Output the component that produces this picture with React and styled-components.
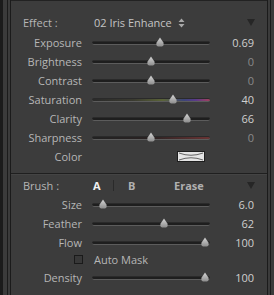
import React from "react";
import styled, { createGlobalStyle } from "styled-components";

const GlobalStyle = createGlobalStyle`
  html, body {
    margin: 0;
    padding: 0;
    background: #1c1c1c;
  }
  body {
    font-family: "Open Sans", "Noto Sans", sans-serif;
    font-size: 11px;
    -webkit-font-smoothing: antialiased;
  }
`;

const Frame = styled.div`
  width: 274px;
  height: 295px;
  display: flex;
  overflow: hidden;
`;

const Strip = styled.div`
  width: ${(p) => p.w}px;
  flex: none;
  background: ${(p) => (p.dark ? "#1b1b1b" : "#3b3b3b")};
`;

const Panel = styled.div`
  flex: 1;
  background: #3c3c3c;
  border-top: 1px solid #222;
  display: flex;
  flex-direction: column;
`;

const Section = styled.section`
  display: flex;
  flex-direction: column;
  padding: ${(p) => p.pad};
`;

const Divider = styled.div`
  height: 1px;
  background: #1f1f1f;
  border-bottom: 1px solid #444;
`;

const Row = styled.div`
  display: grid;
  grid-template-columns: 71px 118px 1fr;
  column-gap: 10px;
  align-items: center;
  height: ${(p) => p.h || 19}px;
  margin-top: ${(p) => p.mt || 0}px;
  padding-right: 13px;
`;

const Label = styled.span`
  text-align: right;
  color: #b6b6b6;
  white-space: nowrap;
`;

const HeadLabel = styled.span`
  color: #b6b6b6;
  padding-left: 12px;
  white-space: nowrap;
`;

const Value = styled.span`
  text-align: right;
  color: ${(p) => (p.dim ? "#8a8a8a" : "#cfcfcf")};
`;

const Track = styled.div`
  position: relative;
  height: 4px;
  box-sizing: border-box;
  border-radius: 2px;
  border-top: 1px solid #2a2a2a;
  border-bottom: 1px solid #5c5c5c;
  background: ${(p) => p.tint || "#1e1e1e"};
`;

const Thumb = styled.svg`
  position: absolute;
  top: -5px;
  width: 10px;
  height: 10px;
  margin-left: -5px;
`;

const Dropdown = styled.div`
  grid-column: 2 / 4;
  display: flex;
  align-items: center;
  gap: 6px;
  color: #c4c4c4;
  padding-left: 2px;
`;

const Collapse = styled.svg`
  width: 8px;
  height: 7px;
  margin-left: auto;
  margin-right: -1px;
`;

const Swatch = styled.svg`
  justify-self: end;
  margin-right: 5px;
  width: 28px;
  height: 11px;
`;

const BrushTabs = styled.div`
  grid-column: 2 / 4;
  display: flex;
  align-items: center;
  padding-left: 1px;
`;

const Tab = styled.span`
  font-weight: bold;
  color: ${(p) => (p.active ? "#f0f0f0" : "#b0b0b0")};
  width: ${(p) => p.w}px;
`;

const TabSep = styled.span`
  width: 1px;
  height: 11px;
  background: #2a2a2a;
  margin-right: 14px;
`;

const Check = styled.span`
  justify-self: end;
  width: 9px;
  height: 9px;
  box-sizing: border-box;
  border: 1px solid #1a1a1a;
  background: #383838;
  margin-right: -1px;
`;

const CheckText = styled.span`
  color: #b6b6b6;
  padding-left: 2px;
`;

const Slider = ({ label, value, min, max, shown, dim, tint, mt }) => {
  const left = 5 + ((value - min) / (max - min)) * 108;
  return (
    <Row mt={mt}>
      <Label>{label}</Label>
      <Track tint={tint}>
        <Thumb viewBox="0 0 10 10" style={{ left }}>
          <defs>
            <linearGradient id="tg" x1="0" y1="0" x2="0" y2="1">
              <stop offset="0" stopColor="#d6d6d6" />
              <stop offset="1" stopColor="#8c8c8c" />
            </linearGradient>
          </defs>
          <path d="M5 0.4 L8.4 5.4 Q9.8 9.6 5 9.6 Q0.2 9.6 1.6 5.4 Z" fill="url(#tg)" />
        </Thumb>
      </Track>
      <Value dim={dim}>{shown}</Value>
    </Row>
  );
};

const Triangle = () => (
  <Collapse viewBox="0 0 8 7">
    <path d="M0 0 H8 L4 7 Z" fill="#262626" />
  </Collapse>
);

const satTint =
  "linear-gradient(90deg, #2a2a2a 0%, #3a3a30 35%, #5b6438 60%, #3c4478 78%, #5a3a8a 88%, #a4405c 100%)";
const sharpTint = "linear-gradient(90deg, #222 0%, #2a2222 50%, #6a3434 100%)";

export default function App() {
  return (
    <>
      <GlobalStyle />
      <Frame>
        <Strip w={3} dark />
        <Strip w={4} />
        <Strip w={1} dark />
        <Strip w={2} />
        <Strip w={1} dark />
        <Panel>
          <Section pad="11px 0 7px">
            <Row h={21}>
              <HeadLabel>Effect :</HeadLabel>
              <Dropdown>
                02 Iris Enhance
                <svg width="7" height="10" viewBox="0 0 7 10">
                  <path d="M3.5 0.5 L6.5 4 H0.5 Z M3.5 9.5 L6.5 6 H0.5 Z" fill="#a8a8a8" />
                </svg>
                <Triangle />
              </Dropdown>
            </Row>
            <Slider label="Exposure" value={0.69} min={-4} max={4} shown="0.69" />
            <Slider label="Brightness" value={0} min={-100} max={100} shown="0" dim />
            <Slider label="Contrast" value={0} min={-100} max={100} shown="0" dim />
            <Slider label="Saturation" value={40} min={-100} max={100} shown="40" tint={satTint} />
            <Slider label="Clarity" value={66} min={-100} max={100} shown="66" />
            <Slider label="Sharpness" value={0} min={-100} max={100} shown="0" dim tint={sharpTint} />
            <Row>
              <Label>Color</Label>
              <Swatch viewBox="0 0 28 11">
                <rect x="0.5" y="0.5" width="27" height="10" fill="#e4e4e4" stroke="#1e1e1e" />
                <path d="M2 2 Q14 6.5 26 2 M2 9 Q14 4.5 26 9" stroke="#555" strokeWidth="0.9" fill="none" />
              </Swatch>
            </Row>
          </Section>
          <Divider />
          <Section pad="0">
            <Row h={20}>
              <HeadLabel>Brush :</HeadLabel>
              <BrushTabs>
                <Tab active w={20}>A</Tab>
                <TabSep />
                <Tab w={46}>B</Tab>
                <Tab w={40}>Erase</Tab>
                <Triangle />
              </BrushTabs>
            </Row>
            <Slider label="Size" value={6} min={0} max={100} shown="6.0" />
            <Slider label="Feather" value={62} min={0} max={100} shown="62" />
            <Slider label="Flow" value={100} min={0} max={100} shown="100" />
            <Row h={13}>
              <Check />
              <CheckText>Auto Mask</CheckText>
            </Row>
            <Slider label="Density" value={100} min={0} max={100} shown="100" mt={3} />
          </Section>
        </Panel>
        <Strip w={1} dark />
        <Strip w={2} />
        <Strip w={1} dark />
        <Strip w={3} />
      </Frame>
    </>
  );
}
